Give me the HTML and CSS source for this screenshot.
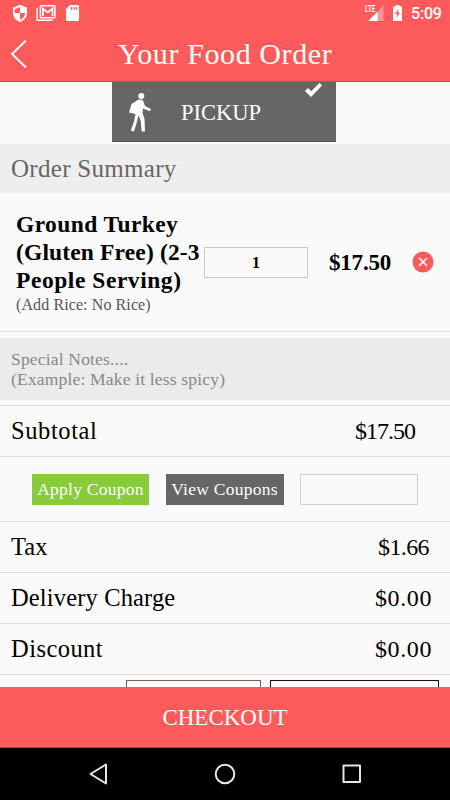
FILE: index.html
```html
<!DOCTYPE html>
<html lang="en">
<head>
    <meta charset="UTF-8">
    <meta name="viewport" content="width=device-width, initial-scale=1.0">
    <title>Your Food Order</title>
    <link rel="stylesheet" href="styles.css">
</head>
<body>
    <div class="screen">
        <header class="header">
            <div class="status-bar">
                <svg class="status-left" width="80" height="26" viewBox="0 0 80 26">
                    <path d="M20 4.700l7 3v5c0 4.300-3 7.900-7 9.300-4-1.400-7-5-7-9.300v-5z" fill="#fff"/>
                    <path d="M20 7v6h-5.200V9.200zM20 13h5.200c-.3 3.200-2.400 5.600-5.200 6.900z" fill="#fd5b5b"/>
                    <path d="M37.200 8v12.200h15.300" fill="none" stroke="#fff" stroke-width="1.500"/>
                    <rect x="40.400" y="5.800" width="14.500" height="12" rx="0.800" fill="none" stroke="#fff" stroke-width="1.500"/>
                    <path d="M42.900 16V8.500l4.800 4 4.800-4V16" fill="none" stroke="#fff" stroke-width="1.700"/>
                    <path d="M70 5h7.500q1.500 0 1.500 1.500v13q0 1.500-1.500 1.500h-10q-1.500 0-1.500-1.500V9z" fill="#fff"/>
                    <path d="M71.500 7v3M74 7v3M76.500 7v3" stroke="#fd5b5b" stroke-width="1.300"/>
                </svg>
                <div class="status-right">
                    <svg width="42" height="26" viewBox="0 0 42 26">
                        <path d="M19.500 5.500V21H4.300z" fill="#ff9292"/>
                        <path d="M13.700 11.500V21H4.300z" fill="#fff"/>
                        <path d="M0 4h12v8H0z" fill="#fd5b5b"/>
                        <text class="lte" x="1" y="11.700" textLength="10.500" lengthAdjust="spacingAndGlyphs">LTE</text>
                        <path d="M31.500 5h4v1.500H38V21h-9V6.500h2.500z" fill="#fff"/>
                        <path d="M34.300 8.700l-3.200 5.200h2l-.4 4 3.400-5.400h-2.200z" fill="#fd5b5b"/>
                    </svg>
                    <span class="clock">5:09</span>
                </div>
            </div>
            <div class="title-bar">
                <svg class="back" width="40" height="34" viewBox="0 0 40 34">
                    <path d="M26 3.500L12 17l14 13.500" fill="none" stroke="#fff" stroke-width="1.900"/>
                </svg>
                <h1>Your Food Order</h1>
            </div>
        </header>

        <main class="content">
            <div class="pickup">
                <svg class="walker" width="24" height="42" viewBox="0 0 24 42">
                    <circle cx="12.300" cy="5" r="3"/>
                    <path d="M8 9.500q3-2 6 0l2 5.500 5.800 3-.8 2.200-7-2.700-.5 4.500 2 6 .5 12.500h-3.300l-1-11-2.300-5-1.500 6.500L5 40.500 1.800 39.500l3.200-9L6.500 23 0 21.500 2.500 13z"/>
                </svg>
                <span class="pickup-label">PICKUP</span>
                <svg class="check" width="20" height="16" viewBox="0 0 20 16">
                    <path d="M1 9l3-3 3.300 3.300L15.500.8l2.600 2.800L7 15z"/>
                </svg>
            </div>

            <h2 class="section-title">Order Summary</h2>

            <div class="item">
                <div class="item-info">
                    <div class="item-name"><span class="first">Ground Turkey</span><br>(Gluten Free) (2-3<br><span class="last">People Serving)</span></div>
                    <div class="item-extra">(Add Rice: No Rice)</div>
                </div>
                <div class="quantity">1</div>
                <div class="item-price">$17.50</div>
                <svg class="remove" width="22" height="22" viewBox="0 0 22 22">
                    <circle cx="11" cy="11" r="10.500" fill="#fd5b5b"/>
                    <path d="M7 7l8 8M15 7l-8 8" stroke="#fff" stroke-width="1.700"/>
                </svg>
            </div>

            <div class="notes">Special Notes....<br>(Example: Make it less spicy)</div>

            <div class="row subtotal"><span>Subtotal</span><span class="amount">$17.50</span></div>
            <div class="coupons">
                <div class="button apply">Apply Coupon</div>
                <div class="button view">View Coupons</div>
                <div class="coupon-input"></div>
            </div>
            <div class="row tax"><span>Tax</span><span class="amount">$1.66</span></div>
            <div class="row delivery"><span>Delivery Charge</span><span class="amount">$0.00</span></div>
            <div class="row discount"><span>Discount</span><span class="amount">$0.00</span></div>
            <div class="tip">
                <div class="tip-select"></div>
                <div class="tip-input"></div>
            </div>
        </main>

        <div class="checkout">CHECKOUT</div>
        <nav class="nav">
            <svg width="450" height="52" viewBox="0 0 450 52" fill="none" stroke="#e8e8e8" stroke-width="2" stroke-linejoin="round">
                <path d="M106 16.500v19L90.500 26z"/>
                <circle cx="225" cy="26" r="9.300"/>
                <rect x="343.500" y="17.500" width="16.500" height="16.500"/>
            </svg>
        </nav>
    </div>
</body>
</html>
```
FILE: styles.css
```css
* {
    box-sizing: border-box;
}
body {
    margin: 0;
    font-family: "Liberation Serif", serif;
    color: #000;
}
svg {
    display: block;
}
.screen {
    width: 450px;
    height: 800px;
    display: flex;
    flex-direction: column;
    background-color: #fafafa;
    overflow: hidden;
}
.header {
    height: 82px;
    flex: none;
    background-color: #fd5b5b;
    border-bottom: 1px solid #ee3a3a;
    color: #fff;
}
.status-bar {
    height: 26px;
    display: flex;
    justify-content: space-between;
}
.status-right {
    display: flex;
    width: 86px;
}
.lte {
    font: bold 9px Roboto, sans-serif;
    fill: #fff;
}
.clock {
    font: 500 16px/28px Roboto, sans-serif;
    margin-left: 5px;
    letter-spacing: -0.2px;
}
.title-bar {
    display: flex;
    height: 56px;
    align-items: center;
}
h1 {
    margin: 0 0 0 78px;
    font-size: 30px;
    font-weight: normal;
    letter-spacing: 0.6px;
}
.content {
    height: 605px;
    flex: none;
    overflow: hidden;
}
.pickup {
    width: 224px;
    height: 60px;
    margin-left: 112px;
    padding-left: 17px;
    display: flex;
    background-color: #666;
    border-bottom: 1px solid #555;
    fill: #fff;
}
.walker {
    margin-top: 9px;
}
.pickup-label {
    width: 125px;
    padding-left: 28px;
    font-size: 22.5px;
    line-height: 61px;
    color: #fff;
}
.check {
    margin-left: 26px;
}
.section-title {
    margin: 2px 0 0;
    height: 49px;
    padding-left: 11px;
    background-color: #eee;
    color: #666;
    font-size: 25px;
    font-weight: normal;
    line-height: 50px;
    letter-spacing: 0.3px;
}
.item {
    height: 139px;
    padding-left: 16px;
    display: flex;
    align-items: center;
    border-bottom: 1px solid #e2e2e2;
}
.item-info {
    width: 188px;
    white-space: nowrap;
}
.item-name {
    font-size: 23.5px;
    font-weight: bold;
    line-height: 28px;
    letter-spacing: 0.15px;
}
.first {
    letter-spacing: 0.4px;
}
.last {
    letter-spacing: 0.55px;
}
.item-extra {
    padding-top: 1px;
    font-size: 16px;
    line-height: 20px;
    letter-spacing: 0.1px;
    color: #555;
}
.quantity {
    width: 104px;
    height: 31px;
    border: 1px solid #c8c8c8;
    text-align: center;
    font-size: 16px;
    font-weight: bold;
    line-height: 29px;
}
.item-price {
    width: 83px;
    margin-left: 21px;
    padding-top: 1px;
    font-size: 23px;
    font-weight: bold;
    letter-spacing: -0.2px;
}
.notes {
    height: 62px;
    margin: 6px 0 5px;
    padding: 12px 11px;
    background-color: #ebebeb;
    color: #888;
    font-size: 17.5px;
    line-height: 19.5px;
    letter-spacing: 0.18px;
}
.row {
    height: 51px;
    padding: 0 18px 0 11px;
    display: flex;
    justify-content: space-between;
    border-bottom: 1px solid #dedede;
    font-size: 24.5px;
    line-height: 50px;
}
.amount {
    font-size: 24px;
}
.subtotal {
    height: 52px;
    padding-right: 35px;
    border-top: 1px solid #dedede;
    letter-spacing: 0.6px;
}
.subtotal .amount {
    letter-spacing: -1px;
}
.tax {
    padding-right: 21px;
}
.tax .amount {
    letter-spacing: -0.6px;
}
.delivery {
    letter-spacing: 0.15px;
}
.discount {
    letter-spacing: 0.45px;
}
.delivery .amount, .discount .amount {
    letter-spacing: 0.6px;
}
.coupons {
    height: 65px;
    padding: 0 32px;
    display: flex;
    justify-content: space-between;
    align-items: center;
    border-bottom: 1px solid #dedede;
}
.button {
    width: 118px;
    height: 31px;
    color: #fff;
    text-align: center;
    font-size: 17.5px;
    line-height: 31px;
    letter-spacing: 0.25px;
}
.apply {
    width: 117px;
    background-color: #88cc3b;
}
.view {
    background-color: #666;
}
.coupon-input {
    width: 118px;
    height: 31px;
    border: 1px solid #d0d0d0;
}
.tip {
    display: flex;
    gap: 9px;
    padding: 5px 0 0 126px;
}
.tip-select, .tip-input {
    width: 135px;
    height: 31px;
    border: 1px solid #666;
}
.tip-input {
    width: 169px;
    border-color: #111;
}
.checkout {
    height: 61px;
    flex: none;
    background-color: #fd5b5b;
    border-bottom: 1px solid #b93f3f;
    color: #fff;
    text-align: center;
    font-size: 23px;
    line-height: 61px;
}
.nav {
    height: 52px;
    flex: none;
    background-color: #000;
}
```
